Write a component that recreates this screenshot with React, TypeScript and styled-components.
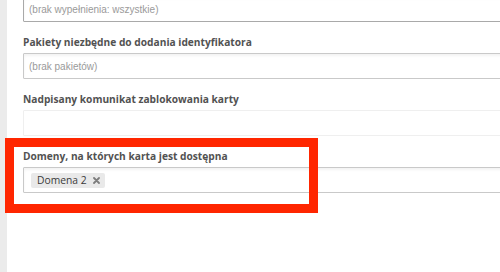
import React from 'react';
import styled, { createGlobalStyle } from 'styled-components';

const GlobalStyle = createGlobalStyle`
  html, body {
    margin: 0;
    padding: 0;
    background: #ffffff;
    overflow: hidden;
  }
  * {
    box-sizing: border-box;
  }
`;

type FieldType = {
  label?: string;
  placeholder?: string;
  tags?: string[];
  tone?: 'dark' | 'normal' | 'light';
};

const fields: FieldType[] = [
  { placeholder: '(brak wypełnienia: wszystkie)', tone: 'dark' },
  { label: 'Pakiety niezbędne do dodania identyfikatora', placeholder: '(brak pakietów)' },
  { label: 'Nadpisany komunikat zablokowania karty', tone: 'light' },
  { label: 'Domeny, na których karta jest dostępna', tags: ['Domena 2'] },
];

const borderFor = (tone?: string) => {
  if (tone === 'dark') return '#a9a9a9';
  if (tone === 'light') return '#efefef';
  return '#c9c9c9';
};

export default function App() {
  return (
    <Page>
      <GlobalStyle />
      <SideStrip />
      <Form>
        {fields.map((field, i) => (
          <Field key={i}>
            {field.label && <Label>{field.label}</Label>}
            <Input tone={field.tone}>
              {field.placeholder && <Placeholder>{field.placeholder}</Placeholder>}
              {field.tags && field.tags.map((tag) => (
                <Tag key={tag}>
                  {tag}
                  <TagRemove>
                    <svg width="7" height="7" viewBox="0 0 7 7">
                      <path d="M1 1 L6 6 M6 1 L1 6" stroke="#7d7d7d" strokeWidth="1.8" strokeLinecap="round" />
                    </svg>
                  </TagRemove>
                </Tag>
              ))}
            </Input>
          </Field>
        ))}
      </Form>
      <Highlight />
    </Page>
  );
}

const Page = styled.div`
  position: relative;
  display: flex;
  width: 500px;
  height: 272px;
  overflow: hidden;
  background: #ffffff;
`;

const SideStrip = styled.div`
  width: 7px;
  flex-shrink: 0;
  background: #ebebeb;
`;

const Form = styled.div`
  display: flex;
  flex-direction: column;
  gap: 13px;
  margin-top: -4px;
  padding-left: 16px;
  width: 540px;
  flex-shrink: 0;
`;

const Field = styled.div`
  display: flex;
  flex-direction: column;
`;

const Label = styled.div`
  font-family: 'Open Sans', sans-serif;
  font-size: 10.2px;
  font-weight: 700;
  line-height: 14px;
  color: #525252;
  margin-bottom: 4px;
  white-space: nowrap;
`;

const Input = styled.div<{ tone?: string }>`
  height: 26px;
  display: flex;
  align-items: center;
  padding: 0 5px;
  border: 1px solid ${(p) => borderFor(p.tone)};
  border-radius: 1px;
  background: #ffffff;
  box-shadow: ${(p) => (p.tone === 'light' ? 'none' : 'inset 0 2px 3px rgba(0, 0, 0, 0.05)')};
`;

const Placeholder = styled.span`
  font-family: 'Liberation Sans', Arial, sans-serif;
  font-size: 10px;
  color: #9a9a9a;
  white-space: nowrap;
`;

const Tag = styled.span`
  display: inline-flex;
  align-items: center;
  gap: 6px;
  height: 15px;
  padding: 0 5px 0 6px;
  margin-left: 2px;
  border-radius: 2px;
  background: #e9e9e9;
  font-family: 'Open Sans', sans-serif;
  font-size: 10.3px;
  color: #3a3a3a;
`;

const TagRemove = styled.span`
  display: inline-flex;
  align-items: center;
`;

const Highlight = styled.div`
  position: absolute;
  left: 5px;
  top: 138px;
  width: 313px;
  height: 75px;
  border: 9px solid #ff2600;
  pointer-events: none;
`;
